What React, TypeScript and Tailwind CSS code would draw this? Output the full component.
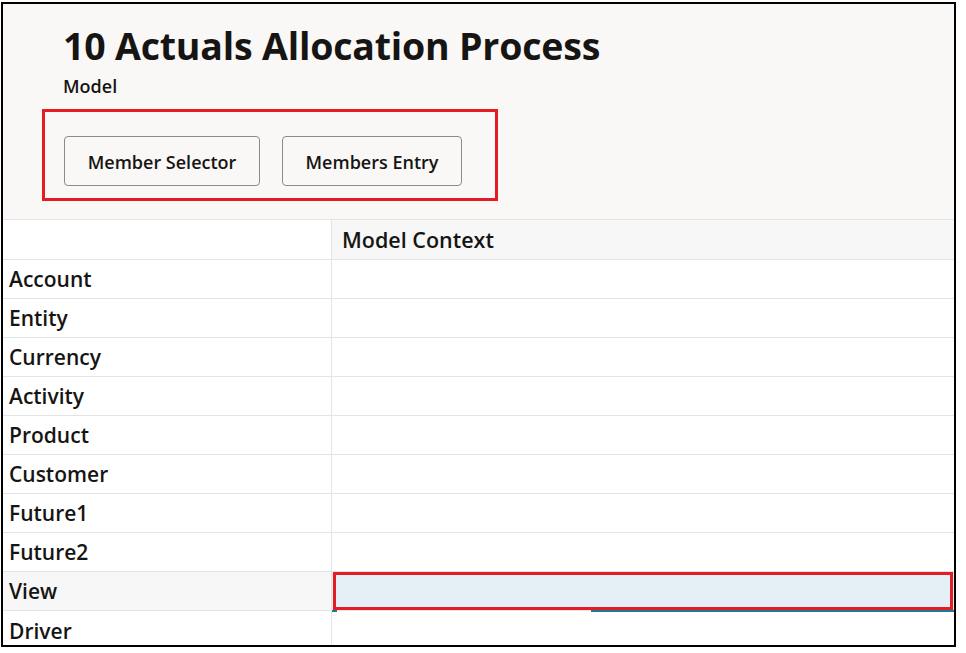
import React from "react";

const rows = ["Account", "Entity", "Currency", "Activity", "Product", "Customer", "Future1", "Future2"];

export default function App() {
  const font = { fontFamily: '"Open Sans", "Noto Sans", sans-serif' };
  return (
    <div className="w-[966px] h-[653px] bg-white overflow-hidden" style={font}>
      <div className="ml-[1px] mt-[2px] w-[955px] h-[645px] border-2 border-black overflow-hidden flex flex-col bg-white text-[#161513]">
        <div className="bg-[#f9f8f6] h-[216px] shrink-0 border-b border-[#e4e4e4] relative pl-[60px] pt-[19px]">
          <h1 className="text-[37.5px] leading-[46px] font-bold tracking-[-0.2px]">10 Actuals Allocation Process</h1>
          <div className="text-[18px] font-semibold leading-[24px] mt-[5px]">Model</div>
          <div className="flex gap-[22px] mt-[38px] pl-[1px]">
            <button className="w-[196px] h-[50px] rounded-[4px] border border-[#8b8b8b] bg-[#f9f8f6] text-[18px] font-semibold pt-[2px]">Member Selector</button>
            <button className="w-[180px] h-[50px] rounded-[4px] border border-[#8b8b8b] bg-[#f9f8f6] text-[18px] font-semibold pt-[2px]">Members Entry</button>
          </div>
          <div className="absolute left-[39px] top-[105px] w-[456px] h-[92px] border-[3px] border-[#e51c24]"></div>
        </div>
        <div className="flex flex-col">
          <div className="flex h-[40px] border-b border-[#e4e4e4]">
            <div className="w-[329px] border-r border-[#e4e4e4] bg-white"></div>
            <div className="flex-1 bg-[#f7f7f7] pl-[10px] pt-[2px] flex items-center text-[21.5px] font-semibold">Model Context</div>
          </div>
          {rows.map((r) => (
            <div key={r} className="flex h-[39px] border-b border-[#e4e4e4]">
              <div className="w-[329px] border-r border-[#e4e4e4] pl-[6px] pt-[2px] flex items-center text-[21px] font-semibold">{r}</div>
              <div className="flex-1"></div>
            </div>
          ))}
          <div className="flex h-[39px] border-b border-[#e4e4e4] bg-[#f7f7f7]">
            <div className="w-[329px] border-r border-[#e4e4e4] pl-[6px] pt-[2px] flex items-center text-[21px] font-semibold">View</div>
            <div className="flex-1 relative bg-[#e4f0f6]">
              <div className="absolute left-0 bottom-[-2px] w-[5px] h-[2px] bg-[#1f7a99]"></div>
              <div className="absolute left-[259px] right-0 bottom-[-2px] h-[2px] bg-[#1f7a99]"></div>
              <div className="absolute left-[1px] right-[1px] top-0 bottom-0 border-[3px] border-[#e51c24]"></div>
            </div>
          </div>
          <div className="flex h-[39px]">
            <div className="w-[329px] border-r border-[#e4e4e4] pl-[6px] pt-[2px] flex items-center text-[21px] font-semibold">Driver</div>
            <div className="flex-1"></div>
          </div>
        </div>
      </div>
    </div>
  );
}
